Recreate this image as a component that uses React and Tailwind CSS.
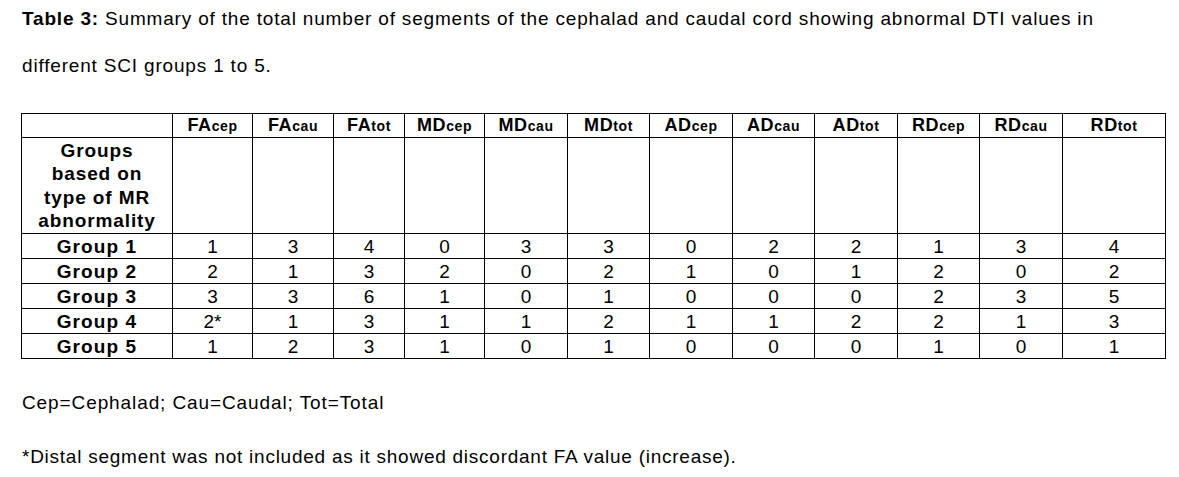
const COLS = [
  ["FA", "cep"],
  ["FA", "cau"],
  ["FA", "tot"],
  ["MD", "cep"],
  ["MD", "cau"],
  ["MD", "tot"],
  ["AD", "cep"],
  ["AD", "cau"],
  ["AD", "tot"],
  ["RD", "cep"],
  ["RD", "cau"],
  ["RD", "tot"],
];

const WIDTHS = [151, 80, 81, 71, 80, 83, 82, 83, 82, 83, 82, 83, 103];

const ROWS = [
  ["Group 1", ["1", "3", "4", "0", "3", "3", "0", "2", "2", "1", "3", "4"]],
  ["Group 2", ["2", "1", "3", "2", "0", "2", "1", "0", "1", "2", "0", "2"]],
  ["Group 3", ["3", "3", "6", "1", "0", "1", "0", "0", "0", "2", "3", "5"]],
  ["Group 4", ["2*", "1", "3", "1", "1", "2", "1", "1", "2", "2", "1", "3"]],
  ["Group 5", ["1", "2", "3", "1", "0", "1", "0", "0", "0", "1", "0", "1"]],
];

export default function App() {
  return (
    <div
      className="w-[1179px] h-[477px] bg-white text-black px-[22px] overflow-hidden"
      style={{ fontFamily: '"Liberation Sans", Arial, sans-serif' }}
    >
      {/* caption */}
      <p className="text-[19px] tracking-[0.82px] leading-[47px] -mt-[5px] whitespace-nowrap">
        <span className="font-bold">Table 3:</span> Summary of the total number
        of segments of the cephalad and caudal cord showing abnormal DTI values in
        <br />
        different SCI groups 1 to 5.
      </p>

      <table className="mt-[24px] -ml-px border-collapse table-fixed w-[1144px] text-[19px]">
        <colgroup>
          {WIDTHS.map((w, i) => (
            <col key={i} style={{ width: w }} />
          ))}
        </colgroup>
        <thead>
          <tr className="h-[24px]">
            <th className="border border-black"></th>
            {COLS.map(([a, b]) => (
              <th
                key={a + b}
                className="border border-black font-bold text-center p-0 text-[18px] tracking-[0.6px] leading-[22px]"
              >
                {a}
                <span className="text-[14px]">{b}</span>
              </th>
            ))}
          </tr>
        </thead>
        <tbody>
          <tr className="h-[96px]">
            <td className="border border-black p-0 text-center font-bold tracking-[0.9px] leading-[23.5px] align-middle">
              Groups
              <br />
              based on
              <br />
              type of MR
              <br />
              abnormality
            </td>
            {COLS.map(([a, b]) => (
              <td key={a + b} className="border border-black"></td>
            ))}
          </tr>
          {ROWS.map(([label, vals]) => (
            <tr key={label} className="h-[25px]">
              <td className="border border-black p-0 text-center font-bold tracking-[1.1px] leading-[23px]">
                {label}
              </td>
              {vals.map((v, i) => (
                <td
                  key={i}
                  className="border border-black p-0 text-center leading-[23px]"
                >
                  {v}
                </td>
              ))}
            </tr>
          ))}
        </tbody>
      </table>

      <p className="text-[19px] tracking-[0.9px] leading-[24px] mt-[32px]">
        Cep=Cephalad; Cau=Caudal; Tot=Total
      </p>
      <p className="text-[19px] tracking-[0.75px] leading-[24px] mt-[30px]">
        *Distal segment was not included as it showed discordant FA value
        (increase).
      </p>
    </div>
  );
}
